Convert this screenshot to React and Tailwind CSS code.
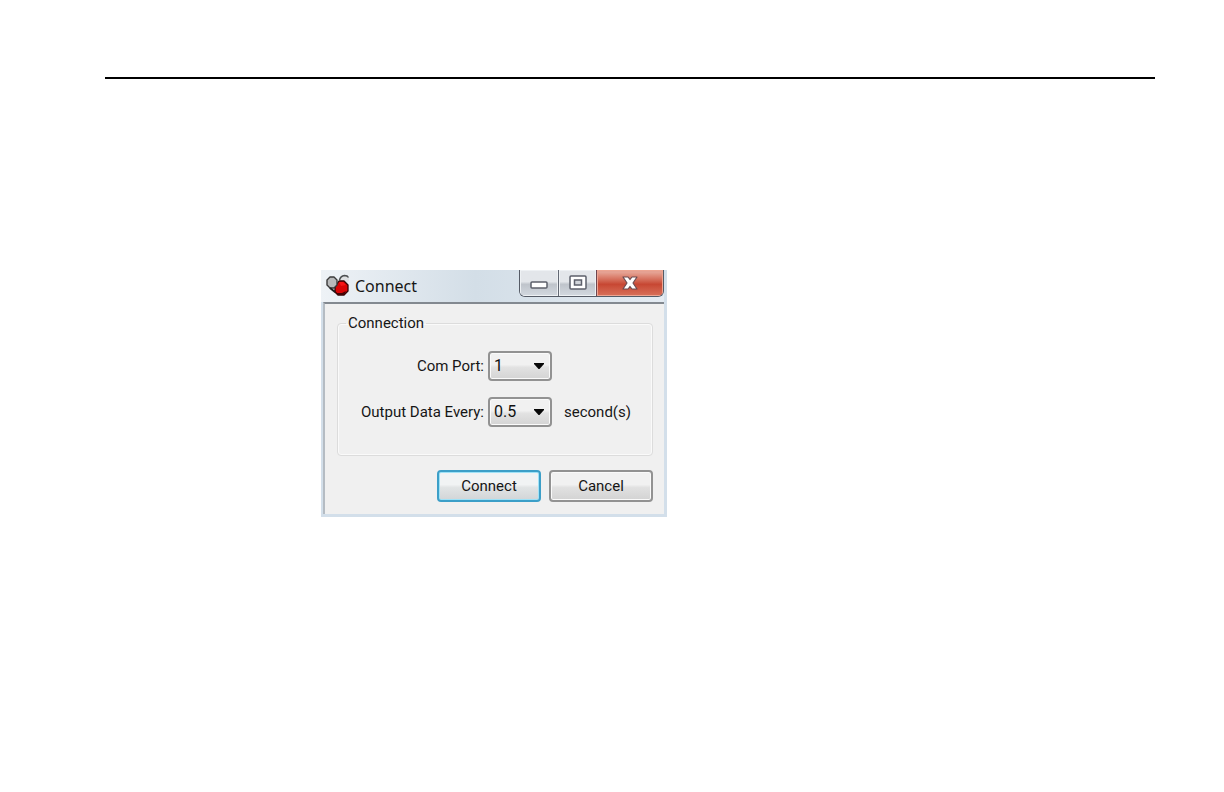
import { useState } from 'react'

function AppIcon() {
  return (
    <svg viewBox="0 0 26 24" className="h-6 w-[26px] shrink-0" aria-hidden="true">
      <path d="M15 7q0-5 5-5 4 0 4 4-1 4-5 4z" fill="#dfe1e3" />
      <path d="M14.500 6q1-4 5-4.500 3 0 4 2" fill="none" stroke="#4d5052" strokeWidth="1.5" />
      <path
        d="M14 7h5l4 4v6l-4 4h-6l-3-3v-5z"
        fill="#d90505"
        stroke="#330404"
        strokeWidth="1.3"
        strokeLinejoin="round"
      />
      <path d="M14 8h4l3 3-5 1z" fill="#f51616" />
      <path d="M9 16l3 3h5l4-2-2 4h-6l-4-3z" fill="#450404" />
      <path
        d="M5 3h4l3 3v5l-3 3H5l-3-3V6z"
        fill="#b9babb"
        stroke="#3a3a3a"
        strokeWidth="1.4"
        strokeLinejoin="round"
      />
      <path d="M5 14l5 4" stroke="#202020" strokeWidth="2" />
    </svg>
  )
}

function WindowControls() {
  return (
    <div className="flex h-[27px] overflow-hidden rounded-b-md border border-t-0 border-[#555b66]">
      <button
        type="button"
        aria-label="Minimize"
        className="flex w-[39px] items-center justify-center border-r border-[#626873] bg-linear-to-b from-[#e3e6ea] from-45% via-[#bfc4cb] via-55% to-[#d3d9e0] shadow-[inset_0_0_0_1px_#eef1f4]"
      >
        <svg viewBox="0 0 18 8" className="mt-1 h-2 w-[18px]" aria-hidden="true">
          <rect x="1" y="1" width="16" height="6" rx="1" fill="#fff" stroke="#5d606b" strokeWidth="1.5" />
        </svg>
      </button>
      <button
        type="button"
        aria-label="Maximize"
        className="flex w-[38px] items-center justify-center border-r border-[#6d4650] bg-linear-to-b from-[#e3e6ea] from-45% via-[#bfc4cb] via-55% to-[#d3d9e0] shadow-[inset_0_0_0_1px_#eef1f4]"
      >
        <svg viewBox="0 0 18 15" className="mb-px h-[15px] w-[18px]" aria-hidden="true">
          <rect x="1" y="1" width="16" height="13" rx="1" fill="#fff" stroke="#5d606b" strokeWidth="1.5" />
          <rect x="5.5" y="5" width="7" height="5" fill="#d2d5da" stroke="#5d606b" strokeWidth="1.5" />
        </svg>
      </button>
      <button
        type="button"
        aria-label="Close"
        className="flex w-[66px] items-center justify-center bg-linear-to-b from-[#e5a192] from-10% via-[#c74733] via-55% to-[#d8705a] shadow-[inset_0_0_0_1px_#eda592]"
      >
        <svg viewBox="0 0 16 14" className="mb-px h-3.5 w-4" aria-hidden="true">
          <path
            d="M1 1h5l2 2.500L10 1h5l-4 6 4 6h-5l-2-2.500L6 13H1l4-6z"
            fill="#fff"
            stroke="#6b4b50"
            strokeWidth="1.2"
            strokeLinejoin="round"
          />
        </svg>
      </button>
    </div>
  )
}

function ComboBox({ id, value, options, onChange }) {
  return (
    <div className="relative w-16">
      <select
        id={id}
        value={value}
        onChange={(e) => onChange(e.target.value)}
        className="block h-[30px] w-full appearance-none rounded-[4px] border-2 border-[#929292] bg-linear-to-b from-[#f1f1f1] from-45% via-[#e2e2e2] via-55% to-[#d4d4d4] pl-1 text-base leading-5 text-[#111] shadow-[inset_0_0_0_1px_#fafafa]"
      >
        {options.map((option) => (
          <option key={option}>{option}</option>
        ))}
      </select>
      <svg
        viewBox="0 0 10 6"
        className="pointer-events-none absolute top-3 right-2 h-1.5 w-2.5"
        aria-hidden="true"
      >
        <path d="M0 0h10v1L5.500 6h-1L0 1z" fill="#080808" />
      </svg>
    </div>
  )
}

export default function App() {
  const [port, setPort] = useState('1')
  const [interval, setInterval] = useState('0.5')

  return (
    <main className="min-h-screen bg-white pt-[77px] pr-[69px] pb-8 pl-[105px] font-[Roboto,sans-serif] text-[15px] leading-5 text-[#161616]">
      <hr className="border-t-2 border-black" />

      <section
        aria-labelledby="dialog-title"
        className="mt-[191px] ml-[216px] w-[346px] bg-[#d3dfea] pr-[3px] pb-[3px] pl-0.5"
      >
        <header className="-ml-0.5 flex h-8 items-start justify-between bg-linear-to-r from-[#eef2f6] via-[#d3dee7] via-45% to-[#e4ebf2]">
          <div className="flex h-8 items-center gap-1 pl-1">
            <AppIcon />
            <h1 id="dialog-title" className="font-['Noto_Sans',sans-serif] text-base leading-5">
              Connect
            </h1>
          </div>
          <WindowControls />
        </header>

        <form
          onSubmit={(e) => e.preventDefault()}
          className="border-t-2 border-l-2 border-t-[#838990] border-l-[#b5bcc3] bg-[#f0f0f0] pt-[9px] pr-[11px] pb-3 pl-3"
        >
          <fieldset className="rounded-[4px] border border-[#dcdcdc] px-1 pb-7 shadow-[inset_0_0_0_1px_#fafafa]">
            <legend className="ml-1 px-0.5">Connection</legend>
            <div className="grid grid-cols-[142px_64px_1fr] items-center gap-x-1 gap-y-4 pt-[18px]">
              <label htmlFor="com-port" className="text-right">
                Com Port:
              </label>
              <ComboBox id="com-port" value={port} options={['1', '2', '3', '4']} onChange={setPort} />
              <span />
              <label htmlFor="output-interval" className="text-right">
                Output Data Every:
              </label>
              <ComboBox
                id="output-interval"
                value={interval}
                options={['0.5', '1', '2', '5']}
                onChange={setInterval}
              />
              <span className="pl-2">second(s)</span>
            </div>
          </fieldset>

          <div className="mt-3.5 flex justify-end gap-2">
            <button
              type="submit"
              className="h-8 w-[104px] rounded-[4px] border-2 border-[#3c9fc8] bg-linear-to-b from-[#f1f3f4] from-45% via-[#e1e4e5] via-55% to-[#d2d5d7] shadow-[inset_0_0_0_1px_#9fe2f7]"
            >
              Connect
            </button>
            <button
              type="button"
              className="h-8 w-[104px] rounded-[4px] border-2 border-[#929292] bg-linear-to-b from-[#f1f1f1] from-45% via-[#e1e1e1] via-55% to-[#d3d3d3] shadow-[inset_0_0_0_1px_#fafafa]"
            >
              Cancel
            </button>
          </div>
        </form>
      </section>
    </main>
  )
}
